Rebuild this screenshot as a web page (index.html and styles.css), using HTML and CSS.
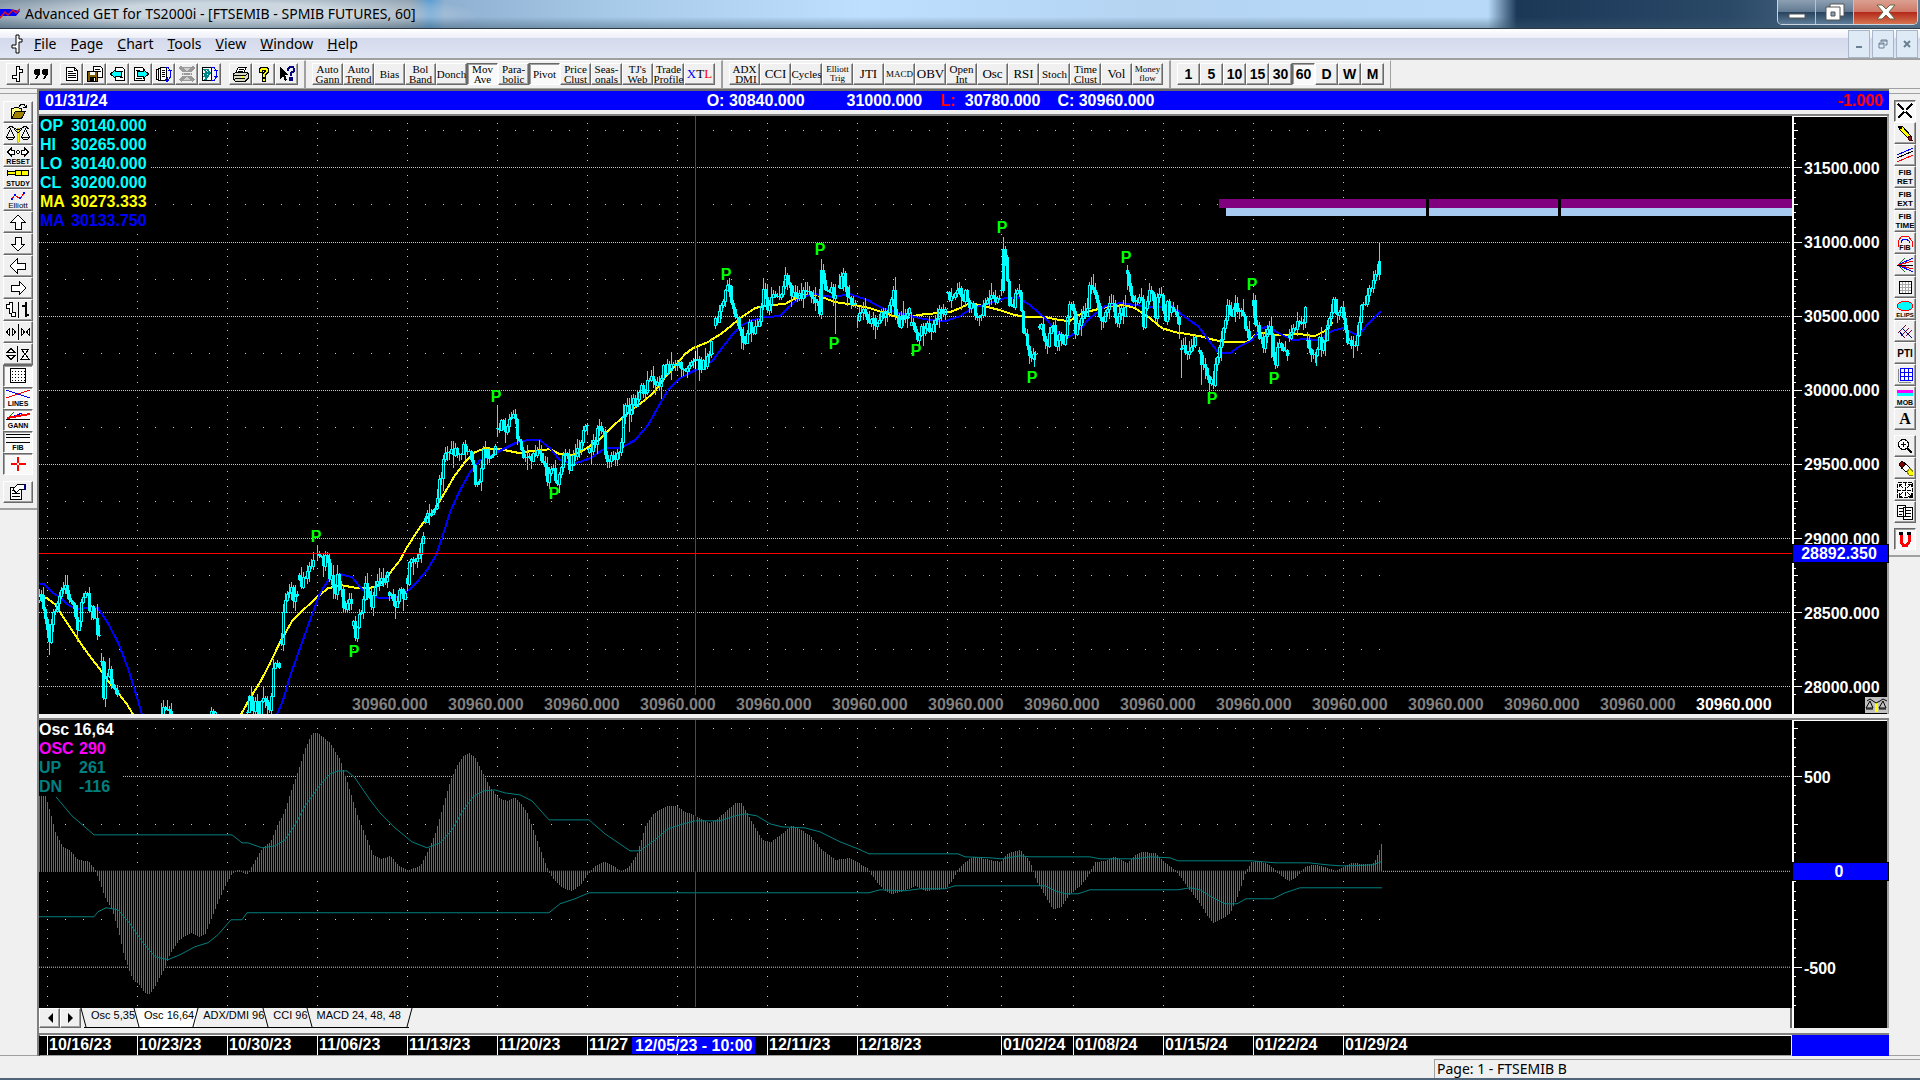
FILE: index.html
```html
<!DOCTYPE html>
<html lang="en">
<head>
    <meta charset="UTF-8">
    <meta name="viewport" content="width=device-width, initial-scale=1.0">
    <title>Advanced GET for TS2000i - [FTSEMIB - SPMIB FUTURES, 60]</title>
    <link rel="stylesheet" href="styles.css">
</head>
<body>

    <!-- Title bar -->
    <header class="title-bar">
        <svg class="app-icon" width="20" height="16" viewBox="0 0 20 16"><path d="M0 3h10l10 2-4 5H0z" fill="#00f"/><path d="M0 12l5-6 3 3 5-5 3 3 4-4" fill="none" stroke="#e01020" stroke-width="1.5"/></svg>
        <h1 class="title-text">Advanced GET for TS2000i - [FTSEMIB - SPMIB FUTURES, 60]</h1>
        <div class="window-buttons">
            <button class="win-button min" aria-label="Minimize"><svg width="18" height="6" viewBox="0 0 18 6"><path d="M1 1h16v4H1z" fill="#fff" stroke="#555"/></svg></button>
            <button class="win-button max" aria-label="Restore"><svg width="20" height="18" viewBox="0 0 20 18"><path d="M5 1h14v12H5z" fill="#fff" stroke="#555"/><path d="M1 4h14v13H1z" fill="#fff" stroke="#555"/><path d="M6 9h4v4H6z" fill="#8aa0b4" stroke="#555"/></svg></button>
            <button class="win-button close" aria-label="Close"><svg width="20" height="16" viewBox="0 0 20 16"><path d="M1 1h5l4 4 4-4h5l-6 7 6 7h-5l-4-4-4 4H1l6-7z" fill="#fff" stroke="#664"/></svg></button>
        </div>
    </header>

    <!-- Menu -->
    <nav class="menu-bar">
        <svg class="menu-icon" width="12" height="20" viewBox="0 0 12 20"><path d="M5 1h3v4h3v3H8v11H5v-5H1v-3h4z" fill="#fff" stroke="#000"/></svg>
        <button class="menu-item"><u>F</u>ile</button>
        <button class="menu-item"><u>P</u>age</button>
        <button class="menu-item"><u>C</u>hart</button>
        <button class="menu-item"><u>T</u>ools</button>
        <button class="menu-item"><u>V</u>iew</button>
        <button class="menu-item"><u>W</u>indow</button>
        <button class="menu-item"><u>H</u>elp</button>
        <div class="mdi-buttons">
            <button class="mdi-button" aria-label="Minimize page"><svg width="10" height="10" viewBox="0 0 10 10"><path d="M2 7h6v2H2z" fill="#6a7f92"/></svg></button>
            <button class="mdi-button" aria-label="Restore page"><svg width="10" height="10" viewBox="0 0 10 10"><path d="M3 3V1h6v5H7M1 4h5v5H1zM1 5h5M3 2h6" fill="none" stroke="#6a7f92"/></svg></button>
            <button class="mdi-button" aria-label="Close page"><svg width="10" height="10" viewBox="0 0 10 10"><path d="M2 2l6 6M8 2L2 8" stroke="#6a7f92" stroke-width="2"/></svg></button>
        </div>
    </nav>

    <!-- Toolbars -->
    <div class="toolbar-row">
        <div class="toolbar">
            <div class="group">
                <button class="tool" aria-label="Bar style"><svg width="16" height="16" viewBox="0 0 16 16"><path d="M6.500 .5h3v3h3v3h-3v9h-3v-3h-4v-3h4z" fill="#fff" stroke="#000"/></svg></button>
                <button class="tool" aria-label="Quotes"><svg width="16" height="16" viewBox="0 0 16 16"><path d="M2 3h4l1 1v4l-3 5H2l2-4H2L1 8V4zM10 3h4l1 1v4l-3 5h-2l2-4h-2L9 8V4z"/></svg></button>
            </div>
            <div class="group">
                <button class="tool" aria-label="New page"><svg width="16" height="16" viewBox="0 0 16 16"><path d="M2.500 1.500h8l3 3v10h-11z" fill="#fff" stroke="#000"/><path d="M10.500 1.500v3h3M4 5.500h5M4 7.500h8M4 9.500h8M4 11.500h8" fill="none" stroke="#000"/></svg></button>
                <button class="tool" aria-label="Save page"><svg width="16" height="16" viewBox="0 0 16 16"><path d="M6.500.5h7l2 2v9h-9z" fill="#fff" stroke="#000"/><path d="M8 3.500h5M8 5.500h6" stroke="#000"/><path d="M.5 5.500h10v10H.5z" fill="#806000" stroke="#000"/><path d="M3 6h5v3H3z" fill="#fff"/><path d="M3 11h6v4H3z"/><path d="M7 12h1v3H7z" fill="#fff"/></svg></button>
                <button class="tool" aria-label="Previous page"><svg width="16" height="16" viewBox="0 0 16 16"><path d="M5.500 1.500h7l2 2v11h-9z" fill="#fff" stroke="#000"/><path d="M10 5.500h3M10 11.500h3" stroke="#000"/><path d="M.5 8l5-4.500v2h6v5h-6v2z" fill="#0ff" stroke="#000"/></svg></button>
                <button class="tool" aria-label="Next page"><svg width="16" height="16" viewBox="0 0 16 16"><path d="M1.500 1.500h8l2 2v11h-10z" fill="#fff" stroke="#000"/><path d="M3 4.500h4M3 12.500h6" stroke="#000"/><path d="M15.500 8l-5-4.500v2h-6v5h6v2z" fill="#0ff" stroke="#000"/></svg></button>
                <button class="tool" aria-label="Cycle pages"><svg width="16" height="16" viewBox="0 0 16 16"><path d="M.5 3.500h2v10h-2zM2.500 2.500h2v12h-2zM4.500 1.500h6v13h-6z" fill="#fff" stroke="#000"/><path d="M6 4.500h3M6 6.500h3M6 8.500h3M6 10.500h3" stroke="#000"/><path d="M9 1.500h3l2 3v7l-2 3H9M12 4h4M9 14l2-2v4z" fill="none" stroke="#00f"/></svg></button>
                <button class="tool" aria-label="Delete page" disabled><svg width="16" height="16" viewBox="0 0 16 16"><path d="M3.500 1.500h9v13h-9z" fill="#ccc" stroke="#999"/><path d="M1 1l14 14M15 1L1 15" stroke="#999" stroke-width="3"/><path d="M3 6h10M3 9h10" stroke="#eee"/></svg></button>
                <button class="tool" aria-label="Cycle charts"><svg width="16" height="16" viewBox="0 0 16 16"><path d="M.5 1.500h9v13h-9z" fill="#fff" stroke="#000"/><path d="M2 3l3 4-3 4M5 3l3 4-3 4M2 7l3 4-2 3" fill="none" stroke="#088" stroke-width="2"/><path d="M9 1.500h3l2 3v7l-2 3H9M12 4h4M12 10h4" fill="none" stroke="#00f"/></svg></button>
            </div>
            <div class="group">
                <button class="tool" aria-label="Print"><svg width="16" height="16" viewBox="0 0 16 16"><path d="M5.500 1h8l-3 6h-8z" fill="#fff" stroke="#000"/><path d="M6 3.500h5M5 5.500h5" stroke="#000"/><path d="M.5 8l3-2h11l1 2v4l-3 3H2l-1.500-2z" fill="#d8d8c0" stroke="#000"/><path d="M1 9.500h11l3-2M2 12.500h10" fill="none" stroke="#000"/><path d="M8 10h3v2H8z" fill="#ff0"/></svg></button>
                <button class="tool" aria-label="Help"><svg width="16" height="16" viewBox="0 0 16 16"><path d="M3.500 5V3l2-2h5l2 2v3L9.500 9v2h-3V8l3-3V4h-3v2h-3zM6.500 12.500h3v3h-3z" fill="#ff0" stroke="#000"/></svg></button>
                <button class="tool" aria-label="Context help"><svg width="16" height="16" viewBox="0 0 16 16"><path d="M1 1v12l3-3 2 5 2-1-2-5h4z"/><path d="M9 5V3l2-2h3l1 2v2L12 7v3M11 12h2v2h-2z" fill="none" stroke="#000080" stroke-width="2"/></svg></button>
            </div>
        </div>
        <div class="toolbar studies">
            <button class="tool wide">Auto<br>Gann</button>
            <button class="tool wide">Auto<br>Trend</button>
            <button class="tool wide">Bias</button>
            <button class="tool wide">Bol<br>Band</button>
            <button class="tool wide">Donch</button>
            <button class="tool wide pressed">Mov<br>Ave</button>
            <button class="tool wide">Para-<br>bolic</button>
            <button class="tool wide pressed">Pivot</button>
            <button class="tool wide">Price<br>Clust</button>
            <button class="tool wide">Seas-<br>onals</button>
            <button class="tool wide">TJ's<br>Web</button>
            <button class="tool wide">Trade<br>Profile</button>
            <button class="tool wide big"><span class="blue">X</span>T<span class="red">L</span></button>
        </div>
        <div class="toolbar studies">
            <button class="tool wide">ADX<br>&nbsp;DMI</button>
            <button class="tool wide big">CCI</button>
            <button class="tool wide">Cycles</button>
            <button class="tool wide small">Elliott<br>Trig</button>
            <button class="tool wide big">JTI</button>
            <button class="tool wide small">MACD</button>
            <button class="tool wide big">OBV</button>
            <button class="tool wide">Open<br>Int</button>
            <button class="tool wide big">Osc</button>
            <button class="tool wide big">RSI</button>
            <button class="tool wide">Stoch</button>
            <button class="tool wide">Time<br>Clust</button>
            <button class="tool wide big">Vol</button>
            <button class="tool wide small">Money<br>flow</button>
        </div>
        <div class="toolbar periods">
            <button class="tool">1</button>
            <button class="tool">5</button>
            <button class="tool">10</button>
            <button class="tool">15</button>
            <button class="tool">30</button>
            <button class="tool pressed">60</button>
            <button class="tool">D</button>
            <button class="tool">W</button>
            <button class="tool">M</button>
        </div>
    </div>

    <div class="workspace">

        <!-- Left tools -->
        <aside class="side left">
            <div class="side-panel">
                <button class="tool" aria-label="Open"><svg width="24" height="18" viewBox="0 0 24 18"><path d="M5.500 15.500v-10h2l1-1h4l1 1h2v3" fill="#ffff80" stroke="#000"/><path d="M5.500 15.500l4-7h10l-4 7z" fill="#a08000" stroke="#000"/><path d="M13 3.500l2-2h3l2 3m-3 0h3v-3" fill="none" stroke="#000"/></svg></button>
                <button class="tool" aria-label="Scales"><svg width="24" height="18" viewBox="0 0 24 18"><path d="M11 3h2v14h-2z" fill="#ff0" stroke="#880" stroke-width=".5"/><path d="M1 4l4-3 3 2 4 2 4-2 3-2 4 3M4.500 4l-4 8h8zM19.500 4l-4 8h8zM.5 12.500l2 2h4l2-2M15.500 12.500l2 2h4l2-2M8 4l4 4 4-4" fill="none" stroke="#000"/></svg></button>
                <button class="tool" aria-label="Reset"><svg width="24" height="18" viewBox="0 0 24 18"><path d="M1.500 5l4-4v2h3v4h-3v2zM22.500 5l-4-4v2h-3v4h3v2zM10 5l2-2 2 2-2 2z" fill="#fff" stroke="#000"/><text class="icon-text" x="12" y="17">RESET</text></svg></button>
                <button class="tool" aria-label="Study"><svg width="24" height="18" viewBox="0 0 24 18"><path d="M1.500 1v6M1.500 2.500h8v3h-8M9.500 1.500h6v5h-6zM15.500 1.500h7v5h-7z" fill="#ff0" stroke="#000"/><text class="icon-text" x="12" y="17">STUDY</text></svg></button>
                <button class="tool" aria-label="Elliott"><svg width="24" height="18" viewBox="0 0 24 18"><path d="M5 9l4-5 5 4 4-6" fill="none" stroke="red"/><path d="M5 7h2v2H5zM8 3h2v2H8zM13 6h2v2h-2zM17 1h2v2h-2z" fill="#00f"/><text class="icon-text plain" x="12" y="17">Elliott</text></svg></button>
                <button class="tool" aria-label="Up"><svg width="24" height="18" viewBox="0 0 24 18"><path d="M12 2l7 7h-4v7H9V9H5z" fill="#fff" stroke="#000"/></svg></button>
                <button class="tool" aria-label="Down"><svg width="24" height="18" viewBox="0 0 24 18"><path d="M12 16l7-7h-4V2H9v7H5z" fill="#fff" stroke="#000"/></svg></button>
                <button class="tool" aria-label="Left"><svg width="24" height="18" viewBox="0 0 24 18"><path d="M4 9l7-7v4h8v6h-8v4z" fill="#fff" stroke="#000"/></svg></button>
                <button class="tool" aria-label="Right"><svg width="24" height="18" viewBox="0 0 24 18"><path d="M20 9l-7-7v4H5v6h8v4z" fill="#fff" stroke="#000"/></svg></button>
                <button class="tool" aria-label="Bar or line"><svg width="24" height="18" viewBox="0 0 24 18"><path d="M12.500 1v16" stroke="#000"/><path d="M.5 3.500h3v-2h3v10h3v4h-4v-3h-2v-5h-3z" fill="#fff" stroke="#000"/><path d="M16 4.500h3M19.500 1v15M20 13.500h3" fill="none" stroke="#000" stroke-width="2"/></svg></button>
                <button class="tool" aria-label="Bar spacing"><svg width="24" height="18" viewBox="0 0 24 18"><path d="M12.500 1v16" stroke="#000"/><path d="M3.500 5.500L.5 9l3 3.500zM6.500 5.500l3 3.500-3 3.500zM15.500 5.500l3 3.500-3 3.500zM23.500 5.500l-3 3.500 3 3.500z" fill="#fff" stroke="#000"/></svg></button>
                <button class="tool" aria-label="Price scale"><svg width="24" height="18" viewBox="0 0 24 18"><path d="M11.500 1v16" stroke="#000"/><path d="M1 7.500h8L5 3.500zM1 10.500h8l-4 4zM15 4h8l-4 5zM15 14h8l-4-5z" fill="#fff" stroke="#000"/></svg></button>
                <button class="tool pressed" aria-label="Grid"><svg width="24" height="18" viewBox="0 0 24 18"><path d="M4.500 1.500h15v14h-15z" fill="#fff" stroke="#000"/><path d="M6 4.500h13M6 7.500h13M6 10.500h13M6 13.500h13" stroke="#000" stroke-dasharray="1 2"/></svg></button>
                <button class="tool pressed" aria-label="Lines"><svg width="24" height="18" viewBox="0 0 24 18"><path d="M0 1l24 8" stroke="#00f"/><path d="M0 9l24-8" stroke="red"/><text class="icon-text" x="12" y="17">LINES</text></svg></button>
                <button class="tool pressed" aria-label="Gann"><svg width="24" height="18" viewBox="0 0 24 18"><path d="M1 8L8 1" stroke="green"/><path d="M1 8l15-6" stroke="#00f"/><path d="M1 7l23-4" stroke="red" stroke-width="2"/><path d="M0 8.500h24" stroke="#000"/><text class="icon-text" x="12" y="17">GANN</text></svg></button>
                <button class="tool pressed" aria-label="Fib"><svg width="24" height="18" viewBox="0 0 24 18"><path d="M0 1.500h24M0 4.500h24M0 9.500h24" stroke="#000"/><text class="icon-text" x="12" y="17">FIB</text></svg></button>
                <button class="tool pressed" aria-label="Crosshair"><svg width="24" height="18" viewBox="0 0 24 18"><path d="M12 2v6M12 10v6M5 9h6M13 9h7" stroke="red" stroke-width="2"/></svg></button>
                <button class="tool spaced" aria-label="Properties"><svg width="24" height="18" viewBox="0 0 24 18"><path d="M4.500 4.500h11v12h-11z" fill="#fff" stroke="#000"/><path d="M6 7.500h3M6 10.500h8M6 13.500h8" stroke="#000"/><path d="M7 6l5-5h6v5h-4l-4 4z" fill="#fff" stroke="#000"/><path d="M18 1h2v6h-2z" fill="#000080"/></svg></button>
            </div>
        </aside>

        <!-- Charts -->
        <main class="charts">
            <div class="quote-bar">
                <span class="quote-date">01/31/24</span>
                <span class="quote">O: 30840.000</span>
                <span class="quote high">31000.000</span>
                <span class="quote low"><span class="red">L:</span> <span>30780.000</span></span>
                <span class="quote">C: 30960.000</span>
                <span class="quote-change">-1.000</span>
            </div>

            <section class="pane price-pane">
                <div class="plot">
                    <svg id="price-chart" viewBox="39 116 1753 598" preserveAspectRatio="none"></svg>
                    <dl class="legend">
                        <div class="cyan"><dt>OP</dt><dd>30140.000</dd></div>
                        <div class="cyan"><dt>HI</dt><dd>30265.000</dd></div>
                        <div class="cyan"><dt>LO</dt><dd>30140.000</dd></div>
                        <div class="cyan"><dt>CL</dt><dd>30200.000</dd></div>
                        <div class="yellow"><dt>MA</dt><dd>30273.333</dd></div>
                        <div class="ma-blue"><dt>MA</dt><dd>30133.750</dd></div>
                    </dl>
                    <div class="last-prices" id="last-prices"></div>
                </div>
                <div class="axis">
                    <svg id="price-axis" viewBox="1792 116 97 598" preserveAspectRatio="none"></svg>
                    <svg class="scale-icon" width="23" height="16" viewBox="0 0 23 16"><path d="M0 0h23v16H0z" fill="#c0c0c0"/><path d="M10 5h3v10h-3z" fill="#ff0"/><path d="M2 4l3-2 3 2 3 2 4-2 3-2 4 2M5 4l-4 7h7zM18 4l-4 7h7zM1 12h7M14 12h7" fill="none" stroke="#000"/></svg>
                </div>
            </section>

            <section class="pane osc-pane">
                <div class="plot">
                    <svg id="osc-chart" viewBox="39 720 1753 288" preserveAspectRatio="none"></svg>
                    <dl class="legend osc-legend">
                        <div class="white"><dt>Osc 16,64</dt></div>
                        <div class="magenta"><dt>OSC</dt><dd>290</dd></div>
                        <div class="teal"><dt>UP</dt><dd>261</dd></div>
                        <div class="teal"><dt>DN</dt><dd>-116</dd></div>
                    </dl>
                    <div class="tabs">
                        <button class="scroll" aria-label="Scroll left"><svg width="6" height="10" viewBox="0 0 6 10"><path d="M6 0v10L1 5z"/></svg></button>
                        <button class="scroll" aria-label="Scroll right"><svg width="6" height="10" viewBox="0 0 6 10"><path d="M0 0v10l5-5z"/></svg></button>
                        <button class="tab">Osc 5,35</button>
                        <button class="tab active">Osc 16,64</button>
                        <button class="tab">ADX/DMI 96</button>
                        <button class="tab">CCI 96</button>
                        <button class="tab last">MACD 24, 48, 48</button>
                    </div>
                </div>
                <div class="axis">
                    <svg id="osc-axis" viewBox="1792 720 97 308" preserveAspectRatio="none"></svg>
                </div>
            </section>

            <div class="date-bar">
                <div class="dates" id="dates"></div>
                <div class="date-end"></div>
            </div>
        </main>

        <!-- Right tools -->
        <aside class="side right">
            <div class="side-panel">
                <button class="tool pressed" aria-label="Off"><svg width="16" height="16" viewBox="0 0 16 16"><path d="M1 1l6 6M9 9l6 6M15 1L9 7M7 9l-6 6" stroke="#000" stroke-width="2"/></svg></button>
                <button class="tool" aria-label="Pencil"><svg width="16" height="16" viewBox="0 0 16 16"><path d="M2 4l3-3 9 10-2 3z" fill="#ff0" stroke="#000"/><path d="M1 1h4v3H2z"/><path d="M11 12l3-1 1 4h-3z" fill="#802020" stroke="#400"/></svg></button>
                <button class="tool" aria-label="Trend lines"><svg width="16" height="16" viewBox="0 0 16 16"><path d="M0 8l16-7" stroke="#00f"/><path d="M0 11l16-7" stroke="#000"/><path d="M0 15l16-7" stroke="red"/></svg></button>
                <button class="tool label">FIB<br>RET</button>
                <button class="tool label">FIB<br>EXT</button>
                <button class="tool label">FIB<br>TIME</button>
                <button class="tool" aria-label="Fib arcs"><svg width="16" height="16" viewBox="0 0 16 16"><path d="M1 12V6l4-5h6l4 5v6" fill="none" stroke="red"/><path d="M4 8V6l3-2h2l3 2v2" fill="none" stroke="#00f"/><text class="icon-text" x="8" y="15">FIB</text></svg></button>
                <button class="tool" aria-label="Gann fan"><svg width="16" height="16" viewBox="0 0 16 16"><path d="M1 8l7-7M1 8l7 7" stroke="green"/><path d="M1 8l15-7M1 8l15 7" stroke="#00f"/><path d="M1 8l15-4M1 8l15 4" stroke="red"/><path d="M0 8.500h16" stroke="#000"/></svg></button>
                <button class="tool" aria-label="Gann box"><svg width="16" height="16" viewBox="0 0 16 16"><path d="M2.500 2.500h12v12h-12z" fill="#fff" stroke="#000"/><path d="M5.500 3v11M8.500 3v11M11.500 3v11M3 5.500h11M3 8.500h11M3 11.500h11" stroke="#aaa"/></svg></button>
                <button class="tool" aria-label="Ellipse"><svg width="20" height="18" viewBox="0 0 20 18"><ellipse cx="10" cy="6" rx="7.500" ry="5" fill="#0ff" stroke="red"/><text class="icon-text tiny" x="10" y="17">ELIPS</text></svg></button>
                <button class="tool" aria-label="Pitchfork"><svg width="16" height="16" viewBox="0 0 16 16"><path d="M1 10l8-8M4 13l8-8M7 15l8-8" stroke="#800040" stroke-dasharray="2 1"/><path d="M5 5l10 10M2 8l5 6" stroke="#000080"/></svg></button>
                <button class="tool label heavy">PTI</button>
                <button class="tool" aria-label="Square"><svg width="16" height="16" viewBox="0 0 16 16"><path d="M3.500 1.500h12v12h-12zM7.500 1v12M11.500 1v12M3 5.500h12M3 9.500h12" fill="#fff" stroke="#00f"/><path d="M1.500 2v13M2 15.500h12" stroke="#888"/></svg></button>
                <button class="tool" aria-label="MOB"><svg width="20" height="18" viewBox="0 0 20 18"><path d="M2 2h16v3H2z" fill="#f0f"/><path d="M2 5h16v3H2z" fill="#0ff"/><text class="icon-text" x="10" y="17">MOB</text></svg></button>
                <button class="tool label letter">A</button>
                <button class="tool spaced" aria-label="Zoom"><svg width="16" height="16" viewBox="0 0 16 16"><circle cx="6.500" cy="6.500" r="5" fill="#fff" stroke="#000"/><path d="M4 6.500h5M6.500 4v5" stroke="#000"/><path d="M10 10l5 5" stroke="#000" stroke-width="2"/></svg></button>
                <button class="tool" aria-label="Eraser"><svg width="16" height="16" viewBox="0 0 16 16"><path d="M2 4l3-3 4 3-4 5z" fill="#800000" stroke="#000"/><path d="M5 8l4-4 4 4-4 4z" fill="#fff" stroke="#000"/><path d="M10 12l3-4 3 4v3h-4z" fill="#ff0" stroke="#880"/></svg></button>
                <button class="tool" aria-label="Fit"><svg width="16" height="16" viewBox="0 0 16 16"><path d="M.5.500h15v15H.5zM0 8h16M8 0v16" fill="#fff" stroke="#000" stroke-dasharray="4 1"/><path d="M2 5V2h3M2 2l4 4M11 2h3v3M14 2l-4 4M2 11v3h3M2 14l4-4M11 14h3v-3M14 14l-4-4" fill="none" stroke="#000"/></svg></button>
                <button class="tool" aria-label="Copy"><svg width="16" height="16" viewBox="0 0 16 16"><path d="M.5 1.500h8v11h-8zM6.500 3.500h9v12h-9z" fill="#fff" stroke="#000"/><path d="M2 4.500h4M2 7.500h4M2 10.500h3M8 6.500h6M8 9.500h6M8 12.500h6" stroke="#000"/></svg></button>
                <button class="tool pressed spaced" aria-label="Magnet"><svg width="16" height="16" viewBox="0 0 16 16"><path d="M4 4v7l2 3h4l2-3V4" fill="none" stroke="red" stroke-width="3"/><path d="M2 1h4v3H2zM10 1h4v3h-4z"/></svg></button>
            </div>
        </aside>
    </div>

    <footer class="status-bar">
        <div class="status-page">Page: 1 - FTSEMIB B</div>
    </footer>

    <script src="chart.js"></script>
</body>
</html>
```
FILE: styles.css
```css
* {
    box-sizing: border-box;
}
body {
    margin: 0;
    height: 100vh;
    display: flex;
    flex-direction: column;
    background: #f0f0f0;
    font-family: "Liberation Sans", Arial, sans-serif;
    overflow: hidden;
}
button {
    margin: 0;
    padding: 0;
    border: 0;
    background: none;
    color: #000;
    font-family: inherit;
}
svg {
    display: block;
    flex: none;
}
.red { color: #f00; }
.blue { color: #00f; }
.cyan { color: #0ff; }
.yellow { color: #ff0; }
.ma-blue { color: #00f; }
.white { color: #fff; }
.magenta { color: #f0f; }
.teal { color: #008080; }

/* title bar */
.title-bar {
    display: flex;
    align-items: center;
    height: 29px;
    border-bottom: 1px solid #2b3947;
    background:
        linear-gradient(to bottom, transparent 60%, rgba(60, 90, 110, 0.45)),
        radial-gradient(ellipse 260px 24px at 220px 15px, rgba(215, 225, 233, 0.85) 50%, transparent),
        linear-gradient(to right, #8295a5 0, #8d9fae 410px, #5f9fd4 430px, #8fb0d0 445px, #a9cbea 620px, #bfdfff 45%, #b4d4f2 60%, #b8daf8 77.5%, #1b3857 79%, #2a4967 90%, #5f7c95);
}
.app-icon {
    margin-right: 5px;
}
.title-text {
    margin: 0;
    flex: 1;
    font: 14px/20px "Noto Sans", sans-serif;
    color: #000;
}
.window-buttons {
    display: flex;
    align-self: flex-start;
    height: 25px;
    margin-right: 2px;
    border: 1px solid #c9d6e2;
    border-top: 0;
    border-radius: 0 0 5px 5px;
    overflow: hidden;
}
.win-button {
    display: flex;
    align-items: center;
    justify-content: center;
    width: 38px;
    border-right: 1px solid #b5c4d2;
    background: linear-gradient(#8da0b2, #627b93 48%, #28445f 52%, #5f7d98);
}
.win-button.min svg {
    margin-top: 8px;
}
.win-button.close {
    width: 63px;
    border-right: 0;
    background: linear-gradient(#dba091, #cf7a68 48%, #b52a1b 52%, #d6744f);
}

/* menu */
.menu-bar {
    display: flex;
    align-items: center;
    height: 31px;
    padding-left: 11px;
    border-bottom: 2px solid #a0a0a0;
    background: linear-gradient(#fff, #eef0f8 30%, #d4daec 32%, #e0e5f3);
}
.menu-icon {
    margin-right: 4px;
}
.menu-item {
    padding: 0 7px;
    font: 14px/20px "Noto Sans", sans-serif;
}
.mdi-buttons {
    display: flex;
    gap: 2px;
    align-self: stretch;
    margin: 1px 2px 0 auto;
}
.mdi-button {
    display: flex;
    align-items: center;
    justify-content: center;
    width: 22px;
    border: 1px solid #a8b6c8;
    background: #deebf7;
}

/* toolbars */
.toolbar-row {
    display: flex;
    height: 29px;
}
.toolbar {
    display: flex;
    gap: 8px;
    padding: 2px 6px;
    border-right: 2px solid #a0a0a0;
    border-top: 1px solid #fff;
    border-bottom: 1px solid #a0a0a0;
}
.toolbar .group {
    display: flex;
}
.studies,
.periods {
    gap: 0;
}
.periods {
    border-right-width: 1px;
}
.toolbar-row::after {
    content: "";
    flex: 1;
    border-bottom: 1px solid #a0a0a0;
}
.tool {
    display: flex;
    align-items: center;
    justify-content: center;
    flex: none;
    width: 23px;
    height: 22px;
    border: 1px solid;
    border-color: #fff #696969 #696969 #fff;
    box-shadow: inset -1px -1px #a0a0a0;
    background: #f0f0f0;
}
.tool.pressed {
    border-color: #696969 #fff #fff #696969;
    box-shadow: inset 1px 1px #a0a0a0;
    background: #f9f9f9;
}
.tool svg {
    shape-rendering: crispEdges;
}
.tool.wide {
    width: 31px;
    font: 11px/10px "Liberation Serif", serif;
}
.tool.wide.big {
    font-size: 13px;
}
.tool.wide.small {
    font-size: 9px;
    line-height: 9px;
}
.periods .tool {
    font-size: 14px;
    font-weight: bold;
}
.icon-text {
    font: bold 7px "Liberation Sans", sans-serif;
    text-anchor: middle;
}
.icon-text.plain {
    font-weight: normal;
    font-size: 8px;
}
.icon-text.tiny {
    font-size: 6px;
}

/* side tool columns */
.workspace {
    flex: 1;
    display: flex;
    min-height: 0;
}
.side {
    flex: none;
    border-bottom: 1px solid #a0a0a0;
}
.side-panel {
    border-bottom: 2px solid #a0a0a0;
}
.left {
    width: 37px;
}
.left .side-panel {
    margin-top: 4px;
    padding: 7px 0 5px 3px;
    border-top: 1px solid #a0a0a0;
}
.left .tool {
    width: 30px;
}
.right {
    width: 31px;
}
.right .side-panel {
    margin-top: 4px;
    padding: 6px 0 5px 5px;
    border-top: 1px solid #a0a0a0;
}
.right .tool {
    width: 22px;
}
.side .spaced {
    margin-top: 6px;
}
.right .spaced {
    margin-top: 5px;
}
.tool.label {
    font: bold 8px/9px "Liberation Sans", sans-serif;
}
.tool.heavy {
    font-size: 10px;
}
.tool.letter {
    font: bold 16px/16px "Liberation Serif", serif;
}

/* charts */
.charts {
    flex: 1;
    min-width: 0;
    display: flex;
    flex-direction: column;
    font-size: 16px;
    font-weight: bold;
    border-left: 2px solid #808080;
}
.quote-bar {
    display: flex;
    align-items: center;
    flex: none;
    height: 21px;
    border-top: 2px solid #696969;
    padding: 0 6px;
    background: #00f;
    color: #fff;
    line-height: 19px;
}
.quote-date {
    flex: 0 0 36%;
}
.quote {
    margin-right: 22px;
}
.quote.high {
    margin-left: 20px;
    margin-right: 18px;
}
.quote.low .red {
    margin-right: 5px;
}
.quote.low {
    margin-right: 17px;
}
.quote-change {
    margin-left: auto;
    color: #f00;
}
.pane {
    display: flex;
    min-height: 0;
    margin-top: 4px;
    border-top: 2px solid #808080;
}
.price-pane {
    flex: 601 1 0;
}
.osc-pane {
    flex: 309 1 0;
}
.plot {
    position: relative;
    flex: 1;
    min-width: 0;
    display: flex;
    flex-direction: column;
    background: #000;
}
.plot > svg {
    flex: 1;
    width: 100%;
    min-height: 0;
}
.axis {
    position: relative;
    flex: 0 0 97px;
    background: #000;
}
.axis > svg:first-child {
    width: 100%;
    height: 100%;
}
.axis text,
.plot text {
    font: bold 16px "Liberation Sans", sans-serif;
    fill: #fff;
}
.plot .pivot {
    fill: #0f0;
    text-anchor: middle;
}
.axis .tag-text {
    text-anchor: middle;
}
.scale-icon {
    position: absolute;
    right: 1px;
    bottom: 1px;
}
.legend {
    position: absolute;
    left: 0;
    top: 0;
    margin: 0;
    padding: 0 4px 0 1px;
    background: #000;
    line-height: 19px;
}
.legend div {
    display: flex;
}
.legend dt {
    min-width: 31px;
}
.legend dd {
    margin: 0;
}
.osc-legend {
    padding: 0 9px 0 0;
}
.osc-legend dt {
    min-width: 40px;
}
.last-prices {
    position: absolute;
    right: 0;
    bottom: 0;
    display: flex;
    gap: 20px;
    padding-right: 20px;
    background: #000;
    color: #808080;
    line-height: 19px;
}
.last-prices span {
    width: 76px;
}
.last-prices span:last-child {
    color: #fff;
}

/* study tabs */
.tabs {
    display: flex;
    flex: none;
    height: 20px;
    background: #f0f0f0;
    border-right: 2px solid #696969;
}
.scroll {
    display: flex;
    align-items: center;
    justify-content: center;
    width: 21px;
    border: 1px solid;
    border-color: #fff #696969 #696969 #fff;
    box-shadow: inset -1px -1px #a0a0a0;
}
.tab {
    position: relative;
    padding: 0 2px 4px 7px;
    border-bottom: 1px solid #000;
    font-size: 11px;
    line-height: 15px;
}
.scroll + .tab {
    margin-left: 3px;
}
.tab::before,
.tab.last::after {
    content: "";
    position: absolute;
    top: 0;
    bottom: 0;
    left: -1px;
    border-left: 1px solid #000;
    transform: skewX(15deg);
}
.tab.last {
    padding-right: 8px;
}
.tab.last::after {
    left: auto;
    right: -1px;
    transform: skewX(-15deg);
}
.tab.active {
    background: #fff;
}
.tab.active + .tab::before {
    transform: skewX(-15deg);
}

/* dates */
.date-bar {
    display: flex;
    flex: none;
    height: 23px;
    margin-top: 5px;
    border-top: 2px solid #808080;
}
.dates {
    position: relative;
    flex: 1;
    display: flex;
    min-width: 0;
    border: 1px solid #fff;
    border-color: #fff #f0f0f0 #a0a0a0 #000;
    background: #000;
    color: #fff;
    line-height: 18px;
}
.date {
    flex: none;
    padding-left: 1px;
    border-left: 1px solid #fff;
    white-space: nowrap;
    overflow: hidden;
}
.date.blank {
    border-color: transparent;
}
.date-tag {
    position: absolute;
    left: 592px;
    top: 1px;
    padding: 0 3px;
    background: #00f;
    line-height: 17px;
}
.date-end {
    flex: 0 0 97px;
    background: #00f;
}

/* status bar */
.status-bar {
    flex: none;
    display: flex;
    justify-content: flex-end;
    height: 24px;
    padding-top: 3px;
    border-bottom: 2px solid #51657a;
}
.status-page {
    flex: 0 0 486px;
    padding-left: 2px;
    border-left: 1px solid #a0a0a0;
    border-top: 1px solid #a0a0a0;
    font: 14px/18px "Noto Sans", sans-serif;
}
```
FILE: chart.js
```js
const weeks = [47, 137, 227, 317, 407, 497, 587, 677, 767, 857, 947, 1001, 1073, 1163, 1253, 1343];

// each run is one stretch of prices without a gap: x,y x,y ...
const priceRuns = [
    "39,600 41,595 44,612 47,625 49,640 52,618 55,608 58,600 62,592 66,583 68,605 71,598 74,610 77,625 80,615 83,595 86,585 89,605 92,612 95,622 98,635 100,642",
    "101,662 103,695 106,672 109,668 111,685 114,690 117,698",
    "161,716 163,713 165,716 170,714 172,718",
    "211,716 213,711 215,716",
    "247,712 250,697 253,705 256,700 259,708 262,700 264,690 266,702 269,706 271,700 273,670 275,658 278,662 280,670",
    "281,640 282,615 285,598 288,590 291,592 294,600 297,590",
    "299,575 302,585 305,578 308,565 311,560 314,568",
    "317,554 320,560 323,563 326,560 329,575 332,580 335,592 337,578 339,585 342,600 345,610 348,600 351,606",
    "353,625 356,638 358,625 360,612 363,600 365,580 368,595 370,607 373,595 376,580 379,583 382,580 387,573",
    "389,592 392,598 395,602 398,598 401,592 404,600 405,590",
    "407,578 408,565 410,555 414,560 418,560 420,550 424,537",
    "425,518 428,512 432,518 435,510 437,495 438,478 440,478 442,468 444,445 446,455 448,450 451,455 454,452 458,458 461,450 464,448 467,455 470,452 472,465 475,480 477,485 480,470 482,455 485,450 488,455 491,458 494,452 496,447",
    "497,428 500,425 504,427 507,425 510,415 513,412 515,425 518,440 521,448 524,455 527,458 530,463 533,455 536,448 539,450 542,460 545,472 547,477 550,467 553,470 556,480 559,480 561,465 563,460 566,455 569,465 572,458 575,450 578,447 581,438 584,432 587,430",
    "589,452 592,445 595,440 599,428 602,430 604,445 606,465 609,463 612,458 615,460 618,458 621,445 623,415 626,405 629,410 631,400 634,403 638,395 641,385 644,398 647,380 650,372 653,382 656,380 658,390 661,372 664,368 667,370 670,372 673,365 675,360 678,368 682,368 686,366 690,368 693,355 696,358 698,366 701,365 704,365 707,355 710,345 712,338",
    "714,325 717,320 720,312 723,300 726,292 728,285 731,300 734,315 737,320 740,328 743,337 746,340 749,325 752,325 754,330 757,328 759,318 762,295 764,292 767,308 770,300 774,298 778,295 782,288 785,278 788,275 791,292 795,295 800,298 804,290 808,297 813,295 817,305 820,310 821,270 823,280 826,292 830,290 834,300 836,298",
    "839,285 841,275 844,278 848,298 852,302 856,305",
    "858,320 862,312 865,315 870,320 874,325 878,322 882,315 886,310 890,305 893,290 895,315 898,325 902,320 905,315 909,305",
    "911,325 915,330 918,338 922,330 925,325 930,330 935,322 940,312 945,312",
    "947,292 950,300 954,300 958,290 962,300 966,290 969,305 973,310 978,315 983,305 987,298 991,300 995,297 998,305 1000,295",
    "1001,290 1002,242 1004,245 1006,262 1008,300 1012,310 1015,290 1018,286 1020,295 1023,330 1026,340 1030,355 1033,360 1036,345",
    "1038,326 1042,330 1045,345 1049,335 1052,320 1055,345 1059,340 1063,345 1066,330 1069,298 1072,300 1075,330 1078,325 1082,312 1086,310 1089,290 1092,278 1095,300 1099,315 1103,318 1107,310 1112,296 1116,320 1121,310 1125,312",
    "1127,270 1129,285 1133,300 1138,305 1141,300 1142,335 1144,318 1147,300 1151,290 1155,315 1158,292 1161,300 1164,325 1167,302 1170,310 1174,315 1179,327",
    "1181,350 1184,350 1187,358 1190,345 1193,345 1196,330",
    "1199,350 1201,365 1205,370 1209,378 1213,388 1215,365 1218,350 1221,335 1224,320 1227,310 1231,322 1235,305 1239,312 1243,310 1246,330 1249,340",
    "1253,305 1255,320 1258,330 1262,345 1266,335 1270,320 1272,355 1275,360 1278,340 1282,345 1286,355 1288,350",
    "1289,335 1294,330 1298,320 1303,322 1305,312",
    "1307,340 1310,345 1313,358 1316,362 1319,340 1322,348 1326,330 1330,318 1333,305 1336,312 1340,308 1342,310 1344,330 1347,340 1350,348 1354,345 1357,335 1360,320 1362,300 1364,310 1366,290 1370,290 1374,280 1378,268 1380,248"
];

// long single wicks: x, y from, y to
const wicks = [[317, 545, 560], [497, 406, 430], [629, 410, 432], [728, 284, 292], [821, 259, 312], [835, 300, 334],
    [857, 315, 328], [1003, 237, 292], [1034, 352, 367], [1127, 267, 290], [1181, 340, 378], [1201, 350, 385],
    [1253, 293, 318], [1271, 317, 358], [1275, 352, 369], [1316, 350, 366], [1379, 242, 275], [1235, 299, 322]];

const maFast = ["39,595 47,598 55,604 62,615 70,627 80,642 90,656 100,669 110,683 120,695 127,704 133,714",
    "241,714 250,698 260,682 270,663 280,642 292,621 303,610 318,596 328,588 342,585 358,588 375,587 385,580 392,570 400,560 407,547 418,530 425,520 433,512 445,492 455,475 465,462 475,452 485,448 500,449 520,453 530,451 550,449 560,454 573,455 585,449 600,439 615,424 630,411 645,400 655,391 665,377 675,366 685,354 693,348 708,342 722,333 732,325 740,318 755,308 768,305 785,304 797,297 805,295 817,295 835,302 850,304 870,308 885,313 900,318 912,316 925,314 950,312 960,308 970,303 980,305 1000,310 1015,315 1030,317 1045,317 1060,320 1070,321 1078,315 1090,311 1110,306 1125,305 1135,308 1150,318 1162,328 1175,332 1200,336 1215,340 1228,342 1247,342 1255,335 1262,333 1280,335 1300,334 1315,336 1325,331 1333,322"];
const maSlow = ["39,583 44,584 52,592 60,597 70,606 80,609 90,607 98,608 108,623 118,642 128,668 138,700 142,714",
    "277,714 283,700 290,676 300,648 310,620 320,593 330,577 340,574 352,577 362,589 372,596 382,598 395,597 405,593 415,584 427,570 436,555 442,538 450,512 460,490 470,472 480,460 490,456 503,449 515,443 527,440 540,440 550,448 560,460 570,463 580,462 592,457 605,448 620,448 635,440 648,425 658,407 668,390 680,378 695,370 703,367 712,361 722,348 732,335 742,325 752,320 765,317 780,316 790,306 800,297 815,294 832,297 850,294 868,300 880,307 895,312 915,317 930,320 945,321 960,316 972,308 990,303 1005,298 1018,297 1030,305 1045,318 1058,332 1067,338 1078,331 1090,318 1105,306 1120,303 1135,305 1155,307 1172,306 1185,317 1198,326 1207,338 1218,352 1230,353 1240,346 1252,340 1260,329 1268,326 1280,334 1292,340 1305,339 1320,340 1332,331 1342,328 1358,335 1370,322 1381,311"];

const pivots = [[316, 536], [354, 651], [496, 396], [554, 493], [726, 274], [820, 249], [834, 343], [916, 350],
    [1002, 227], [1032, 377], [1126, 257], [1212, 398], [1252, 284], [1274, 378]];

const oscLine = "39,796 45,796 50,812 55,832 62,846 70,851 78,860 88,861 95,870 98,877 104,895 112,910 118,930 124,956 132,978 140,985 144,992 150,993 156,983 163,970 170,953 178,940 186,934 192,932 200,936 205,933 210,920 218,900 225,885 232,872 238,869 245,873 248,873 255,860 262,848 270,842 277,825 284,812 290,793 297,773 305,748 312,733 318,733 330,743 340,760 350,792 357,815 365,835 373,855 380,859 390,856 400,867 408,870 420,866 428,850 436,830 443,805 450,780 457,765 464,755 469,753 475,758 482,772 490,788 500,799 508,801 514,797 520,803 527,813 535,835 543,858 548,870 553,878 562,887 572,890 580,884 588,873 595,866 604,861 612,865 620,871 628,867 636,856 640,843 645,826 653,814 660,809 668,806 677,806 684,812 692,814 700,819 709,823 718,818 726,811 735,803 741,803 748,815 755,828 762,840 771,842 780,835 792,825 800,829 810,836 822,850 835,860 850,858 860,864 868,869 872,875 878,883 885,890 892,893 900,891 908,888 916,885 925,890 945,888 953,878 957,870 965,862 972,857 985,859 1000,862 1008,853 1020,850 1030,862 1036,880 1045,895 1052,908 1060,907 1070,893 1080,885 1088,875 1095,862 1105,861 1114,857 1127,863 1135,855 1142,852 1155,853 1165,863 1175,870 1180,876 1190,890 1200,903 1207,915 1213,922 1222,918 1230,912 1237,896 1245,873 1251,862 1258,861 1268,864 1275,870 1280,874 1288,880 1296,876 1302,870 1306,866 1315,865 1325,867 1335,871 1344,866 1350,863 1365,864 1372,864 1376,858 1379,850 1381,844";
const bandUp = "56,797 72,816 94,835 232,835 242,843 248,843 262,848 275,846 285,840 295,825 305,806 313,795 320,785 330,774 338,771 347,771 355,778 370,800 380,813 395,828 412,842 427,848 440,843 452,830 462,812 473,797 483,791 495,790 505,793 520,795 532,801 549,820 589,820 605,834 630,851 640,851 655,840 668,829 680,825 695,821 720,821 735,816 745,814 757,816 770,824 782,827 805,828 820,832 840,842 858,849 869,854 958,854 965,857 990,858 1001,859 1020,856 1030,857 1090,857 1100,859 1135,859 1150,857 1170,858 1178,861 1252,861 1275,863 1309,863 1327,865 1340,866 1352,866 1373,865 1381,862";
const bandDown = "39,917 94,917 98,912 106,908 118,910 130,924 143,943 155,957 168,960 180,955 195,947 208,943 218,935 231,920 242,920 247,913 549,913 560,904 575,899 589,893 869,893 880,890 905,891 920,889 945,889 955,886 1045,886 1055,891 1065,894 1078,894 1090,890 1178,890 1190,888 1200,890 1213,898 1225,904 1237,904 1246,899 1273,899 1285,893 1300,888 1382,888";

const points = text => text.split(" ").map(p => p.split(",").map(Number));

function valueAt(pts, x) {
    for (let i = 1; i < pts.length; i++) {
        if (x <= pts[i][0]) {
            const [x0, y0] = pts[i - 1];
            const [x1, y1] = pts[i];
            return y0 + (y1 - y0) * (x - x0) / (x1 - x0);
        }
    }
    return pts[pts.length - 1][1];
}

let seed = 7;
function rand() {
    seed = (seed * 16807) % 2147483647;
    return seed / 2147483647;
}

const box = (x, y, w, h) => `M${x} ${y}h${w}v${h}h${-w}z`;
const fill = (d, color) => `<path d="${d}" fill="${color}"/>`;
const line = (pts, color, width) =>
    `<polyline points="${pts}" fill="none" stroke="${color}" stroke-width="${width}"/>`;

// dotted grid: full rows on the majors, sparse dots on the halves and the weeks
function grid(top, bottom, zero, step) {
    let dots = "";
    let rows = "";
    const first = Math.ceil((top + 4 - zero) / step);
    for (let i = first; zero + i * step < bottom; i++) {
        const y = Math.round(zero + i * step);
        weeks.forEach(x => dots += box(x, y, 1, 1));
        if (i % 10 === 0) {
            rows += `<path d="M39 ${y + 0.5}H1790" stroke="#c8c8c8" stroke-dasharray="1 1"/>`;
        } else if (i % 5 === 0) {
            for (let x = 47; x < 1382; x += 18) dots += box(x, y, 1, 1);
        }
    }
    return rows + fill(dots, "#c8c8c8");
}

function candles() {
    let d = "";
    priceRuns.forEach(run => {
        const pts = points(run);
        let open = pts[0][1];
        for (let x = pts[0][0] | 1; x <= pts[pts.length - 1][0]; x += 2) {
            const close = Math.round(valueAt(pts, x) + (rand() - 0.5) * 12);
            const hi = Math.min(open, close);
            const lo = Math.max(open, close);
            const h = Math.max(lo - hi, 1);
            const up = Math.round(rand() * rand() * 14) + 1;
            d += box(x, hi - up, 1, up);
            d += box(x, lo, 1, Math.round(rand() * rand() * 14) + 1);
            if (close > open || h < 3) {
                d += box(x - 1, hi, 3, h);
            } else {
                d += box(x - 1, hi, 1, h) + box(x + 1, hi, 1, h) + box(x - 1, hi, 3, 1) + box(x - 1, lo, 3, 1);
            }
            open = close;
        }
    });
    wicks.forEach(([x, a, b]) => d += box(x, a, 1, b - a));
    return fill(d, "#0ff");
}

function drawPrice() {
    let out = grid(116, 700, 167.4, 7.41);
    maFast.forEach(p => out += line(p, "#ff0", 2));
    maSlow.forEach(p => out += line(p, "#00f", 2));
    out += candles();
    out += fill(box(1219, 199, 573, 9), "#800080") + fill(box(1226, 208, 566, 8), "#a6caf0");
    out += fill(box(1426, 199, 3, 17) + box(1558, 199, 3, 17), "#000");
    out += fill(box(39, 553, 1753, 1) + box(695, 116, 1, 598), "#f00");
    out += fill(box(695, 351, 1, 18), "#fff");
    pivots.forEach(([x, y]) => out += `<text class="pivot" x="${x}" y="${y + 6}">P</text>`);
    document.getElementById("price-chart").innerHTML = `<g shape-rendering="crispEdges">${out}</g>`;
}

function drawOsc() {
    const pts = points(oscLine);
    let bars = "";
    for (let x = 39; x <= 1381; x += 2) {
        const y = Math.round(valueAt(pts, x));
        bars += y < 871 ? box(x, y, 1, 872 - y) : box(x, 871, 1, y - 870);
    }
    let out = grid(720, 1008, 871.4, 9.55) + fill(bars, "#f0f");
    out += line(bandUp, "#008080", 1) + line(bandDown, "#008080", 1);
    out += fill(box(695, 720, 1, 287), "#f00") + fill(box(695, 816, 1, 55), "#00f");
    document.getElementById("osc-chart").innerHTML = `<g shape-rendering="crispEdges">${out}</g>`;
}

function drawAxis(id, top, bottom, zero, step, labels, tag, tagY) {
    let d = box(1792, top, 2, bottom - top) + box(1792, top, 96, 1);
    for (let i = Math.ceil((top + 4 - zero) / step); zero + i * step < bottom - 20; i++) {
        const size = i % 10 === 0 ? 8 : i % 5 === 0 ? 4 : 2;
        d += box(1794, Math.round(zero + i * step), size, 1);
    }
    let out = fill(d, "#fff") + fill(box(1887, top, 2, bottom - top), "#a0a0a0");
    labels.forEach(([text, y]) => out += `<text x="1804" y="${y + 7}">${text}</text>`);
    out += fill(box(1792, tagY - 9, 97, 19), "#000") + fill(box(1793, tagY - 8, 95, 17), "#00f");
    out += `<text class="tag-text" x="1839" y="${tagY + 6}">${tag}</text>`;
    document.getElementById(id).innerHTML = `<g shape-rendering="crispEdges">${out}</g>`;
}

function drawDates() {
    const cells = [[47, "10/16/23"], [137, "10/23/23"], [227, "10/30/23"], [317, "11/06/23"], [407, "11/13/23"],
        [497, "11/20/23"], [587, "11/27"], [677, ""], [767, "12/11/23"], [857, "12/18/23"], [1001, "01/02/24"],
        [1073, "01/08/24"], [1163, "01/15/24"], [1253, "01/22/24"], [1343, "01/29/24"]];
    const percent = width => (width / 17.51).toFixed(3) + "%";
    let html = `<div class="date blank" style="width: ${percent(7)}"></div>`;
    cells.forEach(([x, text], i) => {
        const end = i + 1 < cells.length ? cells[i + 1][0] : 1791;
        html += `<div class="date" style="width: ${percent(end - x)}">${text}</div>`;
    });
    document.getElementById("dates").innerHTML = html + `<div class="date-tag">12/05/23 - 10:00</div>`;
}

drawPrice();
drawOsc();
drawAxis("price-axis", 116, 714, 167.4, 7.41,
    [31500, 31000, 30500, 30000, 29500, 29000, 28500, 28000].map((p, i) => [p + ".000", Math.round(167 + i * 74.1)]),
    "28892.350", 553);
drawAxis("osc-axis", 720, 1028, 871.4, 9.55, [["500", 776], ["-500", 967]], "0", 871);
drawDates();
document.getElementById("last-prices").innerHTML = "<span>30960.000</span>".repeat(15);
```
